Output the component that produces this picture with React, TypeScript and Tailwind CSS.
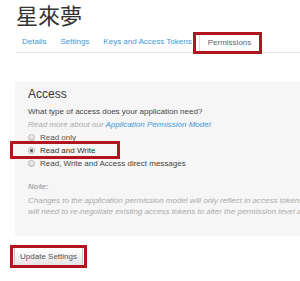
import React from "react";

function Radio({ checked }: { checked?: boolean }) {
  return (
    <span className="relative inline-flex w-[7px] h-[7px] rounded-full border border-[#b5b5b5] bg-gradient-to-b from-[#f4f4f4] to-[#d8d8d8] items-center justify-center mr-[5px] shrink-0">
      {checked && <span className="w-[3px] h-[3px] rounded-full bg-[#555]" />}
    </span>
  );
}

export default function App() {
  return (
    <div className="relative w-[300px] h-[281px] bg-white overflow-hidden font-['Liberation_Sans',Arial,sans-serif] text-[#333] whitespace-nowrap">
      <h1 className="pl-[16px] pt-[4px] h-[32px] text-[22px] leading-[26px] text-[#333] font-['Liberation_Sans','Noto_Sans_CJK_TC',sans-serif]">
        星來夢
      </h1>
      <div className="ml-[15px] flex h-[21px] border-b border-[#e8e8e8] text-[8px]">
        <span className="px-[7px] flex items-center text-[#3b9ad9]">Details</span>
        <span className="px-[7px] flex items-center text-[#3b9ad9]">Settings</span>
        <span className="px-[7px] flex items-center text-[#3b9ad9]">Keys and Access Tokens</span>
        <span className="px-[8px] flex items-center text-[#666] bg-white border border-[#e0e0e0] border-b-white -mb-px">Permissions</span>
      </div>

      <div className="mt-[29px] ml-[15px] bg-[#f6f6f6] h-[154px] pl-[13px] pt-[4px]">
        <div className="text-[12px] leading-[16px] text-[#333]">Access</div>
        <div className="mt-[3px] h-[13px] leading-[13px] text-[8px] text-[#444]">
          What type of access does your application need?
        </div>
        <div className="mt-[1px] h-[12px] leading-[12px] text-[8px] italic text-[#aaa]">
          Read more about our <span className="text-[#3b9ad9]">Application Permission Model</span>.
        </div>
        <div className="h-[13px] flex items-center text-[8px] text-[#555]">
          <Radio />
          Read only
        </div>
        <div className="h-[13px] flex items-center text-[8px] text-[#333]">
          <Radio checked />
          Read and Write
        </div>
        <div className="h-[13px] flex items-center text-[8px] text-[#444]">
          <Radio />
          Read, Write and Access direct messages
        </div>
        <div className="mt-[10px] h-[13px] leading-[13px] text-[8px] italic font-bold text-[#aaa]">Note:</div>
        <div className="mt-[2px] h-[11px] leading-[11px] text-[8px] italic text-[#aaa]">
          Changes to the application permission model will only reflect in access tokens obtained after
        </div>
        <div className="h-[11px] leading-[11px] text-[8px] italic text-[#aaa]">
          will need to re-negotiate existing access tokens to alter the permission level associated with each
        </div>
      </div>

      <button className="mt-[11px] ml-[14px] h-[19px] w-[69px] border border-[#c8c8c8] rounded-[2px] bg-gradient-to-b from-[#ffffff] to-[#e6e6e6] text-[8px] text-[#555] flex items-center justify-center">
        Update Settings
      </button>

      <div className="absolute left-[193px] top-[32px] w-[69px] h-[22px] border-[3px] border-[#b3151f]" />
      <div className="absolute left-[10px] top-[141px] w-[110px] h-[18px] border-[3px] border-[#b3151f]" />
      <div className="absolute left-[10px] top-[245px] w-[77px] h-[23px] border-[3px] border-[#b3151f]" />
    </div>
  );
}
